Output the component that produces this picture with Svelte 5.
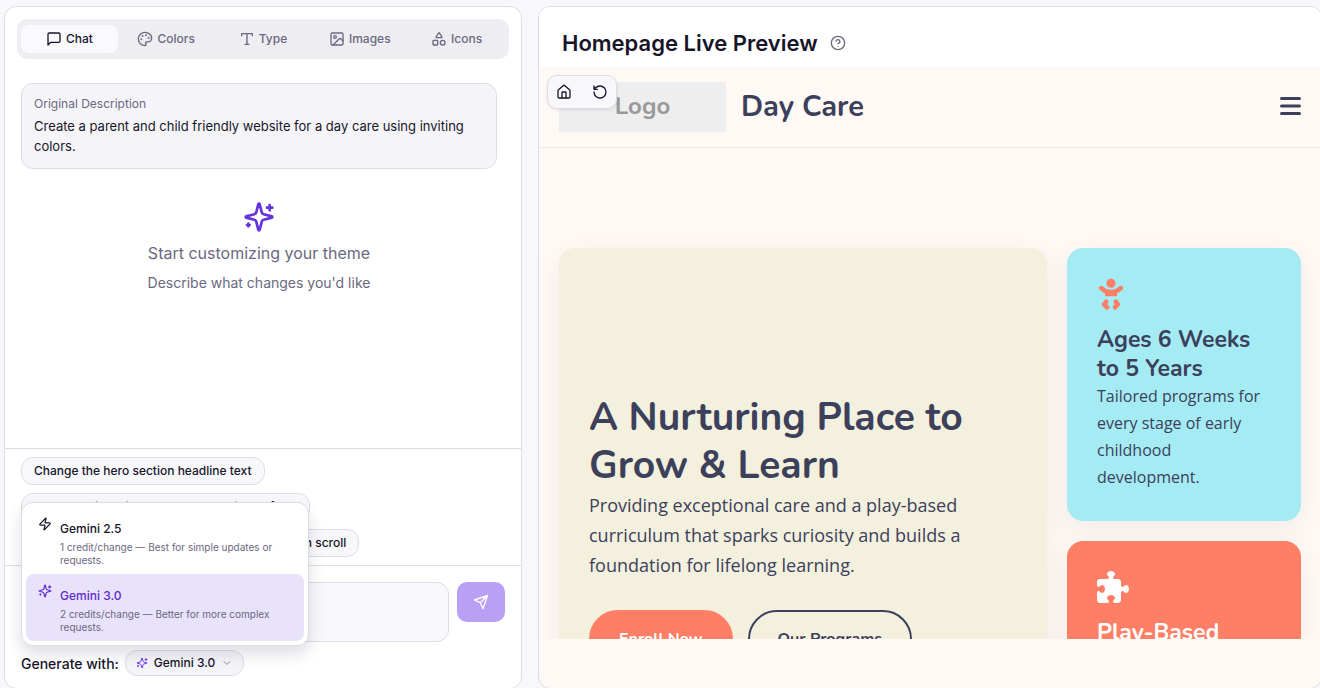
<script>
    let activeTab = $state("chat");
    let menuOpen = $state(true);
    let model = $state("Gemini 3.0");
    let message = $state("");

    const tabs = [
        { id: "chat", label: "Chat" },
        { id: "colors", label: "Colors" },
        { id: "type", label: "Type" },
        { id: "images", label: "Images" },
        { id: "icons", label: "Icons" },
    ];

    const suggestions = [
        "Change the hero section headline text",
        "Add a section with the newsletter signup form",
        "Make all cards and headings slide and fade in on scroll",
    ];

    const models = [
        {
            name: "Gemini 2.5",
            icon: "zap",
            note: "1 credit/change — Best for simple updates or requests.",
        },
        {
            name: "Gemini 3.0",
            icon: "sparkles",
            note: "2 credits/change — Better for more complex requests.",
        },
    ];

    function pickModel(name) {
        model = name;
        menuOpen = false;
    }
</script>

{#snippet icon(name, size, stroke = 2)}
    <svg
        width={size}
        height={size}
        viewBox="0 0 24 24"
        fill="none"
        stroke="currentColor"
        stroke-width={stroke}
        stroke-linecap="round"
        stroke-linejoin="round"
        aria-hidden="true"
    >
        {#if name === "chat"}
            <path d="M21 15a2 2 0 0 1-2 2H7l-4 4V5a2 2 0 0 1 2-2h14a2 2 0 0 1 2 2z" />
        {:else if name === "colors"}
            <circle cx="13.5" cy="6.5" r=".5" fill="currentColor" />
            <circle cx="17.5" cy="10.5" r=".5" fill="currentColor" />
            <circle cx="8.5" cy="7.5" r=".5" fill="currentColor" />
            <circle cx="6.5" cy="12.5" r=".5" fill="currentColor" />
            <path
                d="M12 2C6.5 2 2 6.5 2 12s4.5 10 10 10c.926 0 1.648-.746 1.648-1.688 0-.437-.18-.835-.437-1.125-.29-.289-.438-.652-.438-1.125a1.64 1.64 0 0 1 1.668-1.668h1.996c3.051 0 5.555-2.503 5.555-5.554C21.965 6.012 17.461 2 12 2z"
            />
        {:else if name === "type"}
            <path d="M4 7V4h16v3M9 20h6M12 4v16" />
        {:else if name === "images"}
            <rect x="3" y="3" width="18" height="18" rx="2" />
            <circle cx="9" cy="9" r="2" />
            <path d="m21 15-3.086-3.086a2 2 0 0 0-2.828 0L6 21" />
        {:else if name === "icons"}
            <path
                d="M8.3 10a.7.7 0 0 1-.626-1.079L11.4 3a.7.7 0 0 1 1.198-.043L16.3 8.9a.7.7 0 0 1-.572 1.1Z"
            />
            <rect x="3" y="14" width="7" height="7" rx="1" />
            <circle cx="17.5" cy="17.5" r="3.5" />
        {:else if name === "sparkles"}
            <path
                d="M9.937 15.5A2 2 0 0 0 8.5 14.063l-6.135-1.582a.5.5 0 0 1 0-.962L8.5 9.936A2 2 0 0 0 9.937 8.5l1.582-6.135a.5.5 0 0 1 .963 0L14.063 8.5A2 2 0 0 0 15.5 9.937l6.135 1.581a.5.5 0 0 1 0 .964L15.5 14.063a2 2 0 0 0-1.437 1.437l-1.582 6.135a.5.5 0 0 1-.963 0z"
            />
            <path d="M20 3v4M22 5h-4M4 17v2M5 18H3" />
        {:else if name === "zap"}
            <path
                d="M4 14a1 1 0 0 1-.78-1.63l9.9-10.2a.5.5 0 0 1 .86.46l-1.92 6.02A1 1 0 0 0 13 10h7a1 1 0 0 1 .78 1.63l-9.9 10.2a.5.5 0 0 1-.86-.46l1.92-6.02A1 1 0 0 0 11 14z"
            />
        {:else if name === "send"}
            <path d="m22 2-7 20-4-9-9-4ZM22 2 11 13" />
        {:else if name === "chevron"}
            <path d="m6 9 6 6 6-6" />
        {:else if name === "help"}
            <circle cx="12" cy="12" r="10" />
            <path d="M9.09 9a3 3 0 0 1 5.83 1c0 2-3 3-3 3M12 17h.01" />
        {:else if name === "home"}
            <path d="M15 21v-8a1 1 0 0 0-1-1h-4a1 1 0 0 0-1 1v8" />
            <path
                d="M3 10a2 2 0 0 1 .709-1.528l7-5.999a2 2 0 0 1 2.582 0l7 5.999A2 2 0 0 1 21 10v9a2 2 0 0 1-2 2H5a2 2 0 0 1-2-2z"
            />
        {:else if name === "reset"}
            <path d="M3 12a9 9 0 1 0 9-9 9.75 9.75 0 0 0-6.74 2.74L3 8M3 3v5h5" />
        {/if}
    </svg>
{/snippet}

<div class="shell">
    <section class="panel editor">
        <div class="tabs" role="tablist">
            {#each tabs as tab}
                <button
                    class="tab"
                    class:active={activeTab === tab.id}
                    role="tab"
                    aria-selected={activeTab === tab.id}
                    onclick={() => (activeTab = tab.id)}
                >
                    {@render icon(tab.id, 16)}
                    {tab.label}
                </button>
            {/each}
        </div>

        <div class="conversation">
            <div class="description">
                <div class="description-label">Original Description</div>
                <p>
                    Create a parent and child friendly website for a day care
                    using inviting colors.
                </p>
            </div>
            <div class="empty">
                {@render icon("sparkles", 32)}
                <p class="empty-title">Start customizing your theme</p>
                <p class="empty-note">Describe what changes you'd like</p>
            </div>
        </div>

        <div class="suggestions">
            {#each suggestions as text}
                <button class="chip" onclick={() => (message = text)}>{text}</button>
            {/each}
        </div>

        <div class="composer">
            <div class="message-row">
                <textarea aria-label="Message" bind:value={message}></textarea>
                <button class="send" aria-label="Send" disabled={!message}>
                    {@render icon("send", 16)}
                </button>
            </div>
            <div class="model-row">
                <span id="model-label">Generate with:</span>
                <button
                    class="model-button"
                    aria-haspopup="listbox"
                    aria-expanded={menuOpen}
                    onclick={() => (menuOpen = !menuOpen)}
                >
                    <span class="accent">{@render icon("sparkles", 12)}</span>
                    {model}
                    <span class="chevron">{@render icon("chevron", 12)}</span>
                </button>
                {#if menuOpen}
                    <div class="menu" role="listbox" aria-labelledby="model-label">
                        {#each models as m}
                            <button
                                class="option"
                                class:selected={model === m.name}
                                role="option"
                                aria-selected={model === m.name}
                                onclick={() => pickModel(m.name)}
                            >
                                <span class="option-icon">{@render icon(m.icon, 14)}</span>
                                <span class="option-text">
                                    <span class="option-name">{m.name}</span>
                                    <span class="option-note">{m.note}</span>
                                </span>
                            </button>
                        {/each}
                    </div>
                {/if}
            </div>
        </div>
    </section>

    <section class="panel preview">
        <header class="preview-header">
            <h2>Homepage Live Preview</h2>
            <button class="help" aria-label="Help">{@render icon("help", 16)}</button>
        </header>

        <div class="viewport">
            <div class="toolbar">
                <button aria-label="Home">{@render icon("home", 16)}</button>
                <button aria-label="Reload">{@render icon("reset", 16)}</button>
            </div>

            <nav class="site-nav">
                <div class="logo">Logo</div>
                <a class="brand" href="#home">Day Care</a>
                <button class="burger" aria-label="Menu">
                    <svg width="22" height="20" viewBox="0 0 22 20" aria-hidden="true">
                        <path
                            d="M2.500 1.500h18M2.500 9h18M2.500 16.500h18"
                            stroke="currentColor"
                            stroke-width="3"
                            stroke-linecap="round"
                        />
                    </svg>
                </button>
            </nav>

            <main class="bento">
                <section class="hero">
                    <h1>A Nurturing Place to Grow &amp; Learn</h1>
                    <p>
                        Providing exceptional care and a play-based curriculum
                        that sparks curiosity and builds a foundation for
                        lifelong learning.
                    </p>
                    <div class="hero-actions">
                        <a class="cta filled" href="#enroll">Enroll Now</a>
                        <a class="cta outlined" href="#programs">Our Programs</a>
                    </div>
                </section>

                <article class="card ages">
                    <svg width="28" height="32" viewBox="0 0 28 32" aria-hidden="true">
                        <circle cx="14" cy="5.300" r="4.500" fill="currentColor" />
                        <path d="M8 12.500h12v5.700H8z" fill="currentColor" />
                        <path
                            d="M4.200 10.200 8 12.900Q14 15.200 20 12.900L23.800 10.200M9.200 23.800 7.200 26.400 10 29.300M18.800 23.800 20.800 26.400 18 29.300"
                            fill="none"
                            stroke="currentColor"
                            stroke-width="4.600"
                            stroke-linecap="round"
                            stroke-linejoin="round"
                        />
                    </svg>
                    <h3>Ages 6 Weeks to 5 Years</h3>
                    <p>Tailored programs for every stage of early childhood development.</p>
                </article>

                <article class="card play">
                    <svg width="32" height="32" viewBox="0 0 512 512" fill="currentColor" aria-hidden="true">
                        <path
                            d="M192 104.800c0-9.200-5.800-17.300-13.200-22.800C167.200 73.300 160 61.300 160 48c0-26.500 28.700-48 64-48s64 21.500 64 48c0 13.300-7.200 25.300-18.800 34c-7.400 5.500-13.200 13.600-13.200 22.800c0 12.800 10.400 23.200 23.200 23.200H336c26.500 0 48 21.500 48 48v56.800c0 12.800 10.400 23.200 23.200 23.200c9.200 0 17.300-5.800 22.800-13.200c8.700-11.600 20.700-18.800 34-18.800c26.500 0 48 28.700 48 64s-21.500 64-48 64c-13.300 0-25.300-7.200-34-18.800c-5.500-7.400-13.600-13.200-22.800-13.200c-12.800 0-23.200 10.400-23.200 23.200V464c0 26.500-21.500 48-48 48H279.200c-12.800 0-23.200-10.400-23.200-23.200c0-9.200 5.800-17.300 13.200-22.800c11.600-8.700 18.800-20.700 18.800-34c0-26.500-28.700-48-64-48s-64 21.500-64 48c0 13.300 7.200 25.300 18.800 34c7.400 5.500 13.200 13.600 13.200 22.800c0 12.800-10.400 23.200-23.200 23.200H48c-26.500 0-48-21.500-48-48V343.200C0 330.400 10.400 320 23.200 320c9.200 0 17.300 5.800 22.800 13.200C54.700 344.800 66.700 352 80 352c26.500 0 48-28.700 48-64s-21.500-64-48-64c-13.300 0-25.300 7.200-34 18.800C40.500 250.200 32.400 256 23.200 256C10.400 256 0 245.600 0 232.800V176c0-26.500 21.500-48 48-48H168.800c12.800 0 23.200-10.400 23.200-23.200z"
                        />
                    </svg>
                    <h3>Play-Based Learning</h3>
                    <p>Hands-on activities that build confidence.</p>
                </article>
            </main>
        </div>
    </section>
</div>

<style>
    :global(body) {
        overflow: hidden;
        background: #f8f8fc;
    }

    .shell {
        display: grid;
        grid-template-columns: 518fr 784fr;
        gap: 16px;
        height: calc(100vh + 1px);
        margin-right: -2px;
        padding: 6px 0 0 4px;
        box-sizing: border-box;
        font-family: Inter, sans-serif;
        color: #17152a;
    }

    .shell :global(svg) {
        display: block;
        flex-shrink: 0;
    }

    h1,
    h2,
    h3,
    p {
        margin: 0;
    }

    button,
    textarea {
        font-family: inherit;
        color: inherit;
        box-sizing: border-box;
    }

    button {
        padding: 0;
        border: none;
        background: none;
        cursor: pointer;
    }

    .panel {
        display: flex;
        flex-direction: column;
        min-width: 0;
        min-height: 0;
        box-sizing: border-box;
        background: #fff;
        border: 1px solid #dddde5;
        border-radius: 12px;
    }

    .tabs {
        display: flex;
        margin: 12px;
        padding: 6px 4px;
        border-radius: 10px;
        background: #ededf2;
    }

    .tab {
        flex: 1;
        display: flex;
        align-items: center;
        justify-content: center;
        gap: 4px;
        height: 28px;
        padding-bottom: 1px;
        border-radius: 8px;
        font-size: 12px;
        font-weight: 500;
        color: #6b6880;
    }

    .tab.active {
        background: #fafafd;
        color: #17152a;
    }

    .conversation {
        flex: 1;
        min-height: 0;
        padding: 12px 24px 0 16px;
    }

    .description {
        padding: 12px;
        border: 1px solid #dddde5;
        border-radius: 12px;
        background: #f5f5f9;
        font-size: 13px;
        line-height: 20px;
    }

    .description-label {
        margin-bottom: 4px;
        font-size: 12px;
        line-height: 16px;
        color: #6b6880;
    }

    .empty {
        display: flex;
        flex-direction: column;
        align-items: center;
        padding-top: 32px;
        color: #6b6880;
    }

    .empty :global(svg) {
        color: #6433e0;
    }

    .empty-title {
        margin-top: 8px;
        font-size: 16px;
        line-height: 24px;
    }

    .empty-note {
        margin-top: 8px;
        font-size: 14px;
        line-height: 20px;
    }

    .suggestions {
        display: flex;
        flex-direction: column;
        align-items: flex-start;
        gap: 8px;
        padding: 8px 16px;
        border-top: 1px solid #dddde5;
    }

    .chip {
        height: 28px;
        padding: 0 12px 2px;
        border: 1px solid #dddde5;
        border-radius: 12px;
        background: #f8f8fc;
        font-size: 12px;
        font-weight: 500;
        white-space: nowrap;
    }

    .composer {
        padding: 16px 16px 12px;
        border-top: 1px solid #dddde5;
    }

    .message-row {
        display: flex;
        align-items: flex-start;
        gap: 8px;
    }

    textarea {
        flex: 1;
        height: 60px;
        padding: 8px 12px;
        border: 1px solid #dddde5;
        border-radius: 12px;
        background: #f8f8fc;
        font-size: 14px;
        resize: none;
    }

    .send {
        display: flex;
        align-items: center;
        justify-content: center;
        width: 48px;
        height: 40px;
        border-radius: 10px;
        background: #b9a0f5;
        color: #fff;
    }

    .model-row {
        position: relative;
        display: flex;
        align-items: center;
        gap: 6px;
        margin-top: 8px;
        font-size: 14px;
        font-weight: 500;
    }

    .model-button {
        display: flex;
        align-items: center;
        gap: 6px;
        height: 26px;
        padding: 0 10px 1px;
        border: 1px solid #dddde5;
        border-radius: 12px;
        background: #f5f5f9;
        font-size: 12px;
        font-weight: 500;
    }

    .accent {
        color: #6d3be8;
    }

    .chevron {
        color: #8f8da0;
    }

    .menu {
        position: absolute;
        left: 0;
        bottom: calc(100% + 4px);
        width: 288px;
        padding: 4px;
        box-sizing: border-box;
        border: 1px solid #dddde5;
        border-radius: 12px;
        background: #fff;
        box-shadow: 0 8px 16px rgba(20, 16, 50, 0.14);
    }

    .option {
        display: flex;
        gap: 8px;
        width: 100%;
        padding: 9px 12px 7px;
        border-radius: 8px;
        text-align: left;
    }

    .option.selected {
        background: #e9e2fb;
    }

    .option-icon {
        padding-top: 1px;
    }

    .option-name,
    .option-note {
        display: block;
    }

    .option-name {
        font-size: 12px;
        line-height: 25px;
        font-weight: 500;
    }

    .option-note {
        font-size: 10px;
        line-height: 13px;
        color: #6b6880;
    }

    .selected .option-icon,
    .selected .option-name {
        color: #5b2bd0;
    }

    .preview {
        overflow: hidden;
        padding-bottom: 49px;
        background: #fff9f5;
    }

    .preview-header {
        display: flex;
        align-items: center;
        gap: 12px;
        height: 60px;
        padding: 12px 23px 0;
        box-sizing: border-box;
        background: #fff;
    }

    h2 {
        font-size: 22px;
        line-height: 32px;
        font-weight: 600;
    }

    .help {
        color: #6b6880;
    }

    .viewport {
        position: relative;
        flex: 1;
        min-height: 0;
        overflow: hidden;
        color: #3d405b;
    }

    .toolbar {
        position: absolute;
        top: 8px;
        left: 8px;
        display: flex;
        border: 1px solid #dddde5;
        border-radius: 10px;
        background: #f8f8fc;
        color: #17152a;
        box-shadow: 0 1px 3px rgba(20, 16, 50, 0.1);
    }

    .toolbar button {
        padding: 8px;
        margin-right: 4px;
    }

    .toolbar button:last-child {
        margin-right: 0;
    }

    .site-nav {
        display: flex;
        align-items: center;
        gap: 15px;
        height: 81px;
        padding: 0 20px;
        box-sizing: border-box;
        border-bottom: 1px solid #f0ebe8;
    }

    .logo,
    .brand,
    h1,
    h3,
    .cta {
        font-family: Nunito, Lato, sans-serif;
        font-weight: 700;
    }

    .logo {
        width: 167px;
        padding-bottom: 2px;
        background: #eee;
        color: #999;
        font-size: 24px;
        line-height: 48px;
        text-align: center;
    }

    .brand {
        padding-bottom: 2px;
        color: inherit;
        font-size: 29px;
        text-decoration: none;
    }

    .burger {
        margin-left: auto;
    }

    .bento {
        display: grid;
        grid-template-columns: repeat(12, 1fr);
        grid-auto-rows: 1fr;
        gap: 20px;
        padding: 100px 20px;
        font-family: "Open Sans", sans-serif;
    }

    .hero,
    .card {
        padding: 30px;
        border-radius: 16px;
        box-shadow: 0 8px 30px rgba(0, 0, 0, 0.06);
    }

    .hero {
        grid-column: span 8;
        grid-row: span 2;
        display: flex;
        flex-direction: column;
        justify-content: center;
        background: #f3f0de;
    }

    h1 {
        font-size: 39px;
        line-height: 48px;
    }

    .hero p {
        max-width: 400px;
        font-size: 18px;
        line-height: 30px;
    }

    .hero-actions {
        display: flex;
        gap: 15px;
        margin-top: 30px;
    }

    .cta {
        padding: 14px 28px;
        border: 2px solid #3d405b;
        border-radius: 30px;
        font-size: 16px;
        line-height: 26px;
        color: #3d405b;
        text-decoration: none;
    }

    .cta.filled {
        border-color: #ff7f66;
        background: #ff7f66;
        color: #fff;
    }

    .card {
        grid-column: span 4;
    }

    .card h3 {
        margin-top: 15px;
        font-size: 23px;
        line-height: 29px;
    }

    .card p {
        font-size: 16px;
        line-height: 27px;
    }

    .ages {
        background: #a4ebf3;
    }

    .ages :global(svg) {
        color: #ff7f66;
    }

    .play {
        background: #ff7f66;
        color: #fff;
    }
</style>
